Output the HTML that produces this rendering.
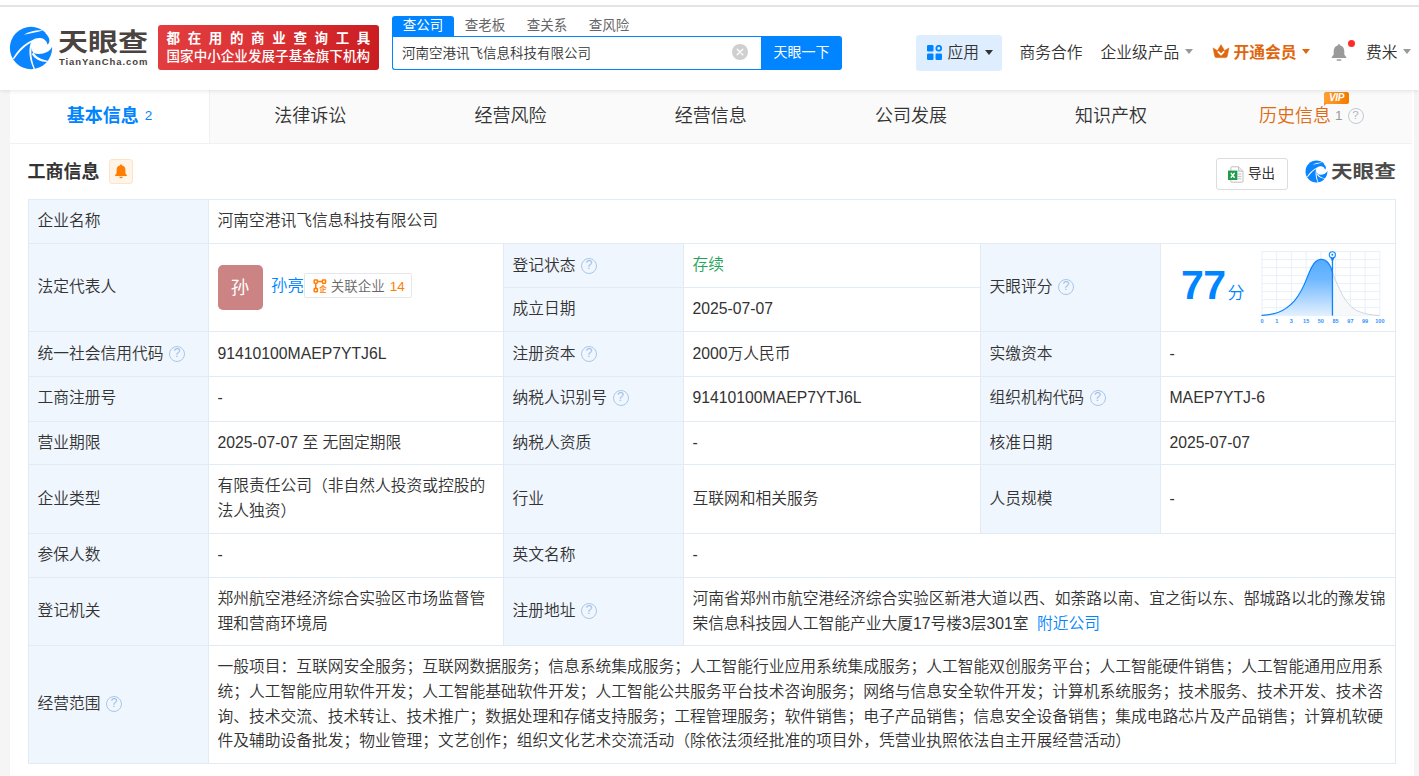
<!DOCTYPE html>
<html lang="zh-CN">
<head>
<meta charset="utf-8">
<title>河南空港讯飞信息科技有限公司 - 天眼查</title>
<style>
*{box-sizing:border-box;margin:0;padding:0}
html,body{width:1419px;height:776px;overflow:hidden;background:#f5f5f5}
body{font-family:"Liberation Sans","Noto Sans CJK SC",sans-serif;color:#333;font-size:15.75px;position:relative}
a{text-decoration:none;color:#0084ff}
.abs{position:absolute}
/* ---------- header ---------- */
#header{position:absolute;left:0;top:0;width:1419px;height:90px;background:#fff;box-shadow:0 1px 4px rgba(0,0,0,.10);z-index:5}
#topline{position:absolute;left:0;top:5px;width:1419px;height:2px;background:#e4e4e4}
#logo-swirl{position:absolute;left:5px;top:20px;width:60px;height:56px}
#logo-cn{position:absolute;left:58px;top:23.6px;width:92px;height:36px;line-height:36px;font-size:25px;font-weight:700;color:#4a4340;white-space:nowrap;letter-spacing:0;transform:scaleX(1.2);transform-origin:0 50%}
#logo-en{position:absolute;left:59px;top:56px;width:92px;height:12px;line-height:12px;font-size:9.5px;font-weight:700;color:#4a4340;letter-spacing:.92px;white-space:nowrap}
#banner{position:absolute;left:158px;top:25px;width:221px;height:45px;border-radius:3px;background:linear-gradient(100deg,#e23d40 0%,#dc3336 45%,#c91c21 100%);color:#fff;font-weight:500;white-space:nowrap}
#banner .l1{font-weight:700;position:absolute;left:8.5px;top:5.7px;height:16px;line-height:16px;font-size:13.5px;letter-spacing:7.65px}
#banner .l2{position:absolute;left:8.5px;top:24.2px;height:16px;line-height:16px;font-size:13.5px;letter-spacing:.07px}
#stabs{position:absolute;left:392px;top:16px;height:20px;white-space:nowrap;font-size:13.5px;color:#666}
#stabs span{display:inline-block;width:62px;height:20px;line-height:19px;text-align:center;vertical-align:top}
#stabs span.on{background:#0084ff;color:#fff;border-radius:3px 3px 0 0}
#sinput{position:absolute;left:392px;top:36px;width:370px;height:34px;border:1px solid #0084ff;border-right:none;border-radius:0 0 0 3px;background:#fff;font-size:13.5px;line-height:33px;font-weight:350;padding-left:9px;color:#333;white-space:nowrap}
#sclear{position:absolute;left:732px;top:44px;width:16px;height:16px}
#sbtn{position:absolute;left:761px;top:36px;width:81px;height:34px;background:#0084ff;color:#fff;border-radius:0 3px 3px 0;text-align:center;line-height:33px;font-size:14px;white-space:nowrap}
.nav{position:absolute;top:40px;height:25px;line-height:25px;font-size:15.75px;color:#333;white-space:nowrap;font-weight:350}
.caret{position:absolute;width:0;height:0;border-left:4.5px solid transparent;border-right:4.5px solid transparent;border-top:5px solid #999}
#app{position:absolute;left:916px;top:35px;width:86px;height:36px;background:#deeeff;border-radius:3px}
/* ---------- card ---------- */
#card{position:absolute;left:10px;top:90px;width:1404px;height:700px;background:#fff}
#tabs{position:absolute;left:0;top:0;width:1401.5px;height:54px;background:#fafafa;border-bottom:1px solid #f1f1f1}
#tabs .tab{position:absolute;top:0;height:53px;line-height:53.4px;font-weight:350;width:200.2px;text-align:center;font-size:18px;color:#333;white-space:nowrap}
#tabs .tab.on{background:#fff;color:#0084ff;font-weight:700;line-height:51.5px;border-right:1px solid #f0f0f0}
#tabs .tab small{font-size:13.5px;font-weight:400;vertical-align:1.6px;margin-left:1px}
#vip{position:absolute;left:1314px;top:2px;width:25px;height:11.5px;border-radius:2px 2px 2px 0;background:linear-gradient(90deg,#ffa033,#f57a00);color:#fff;font-size:10px;line-height:11.5px;font-weight:700;text-align:center;letter-spacing:-.4px}
#vip:after{content:"";position:absolute;left:0;top:11px;border-top:3.5px solid #f98d1a;border-right:3.5px solid transparent}
.q2{left:1337.5px;top:18px;width:16px;height:16px;border:1.6px solid #c0c9d6;border-radius:50%;color:#aab5c4;font-size:11.5px;line-height:13px;text-align:center}
h2#sec{position:absolute;left:17.5px;top:68.5px;height:26px;line-height:26px;font-size:18px;font-weight:700;color:#333;white-space:nowrap}
#bellbtn{position:absolute;left:99px;top:69px;width:24px;height:25px;border:1px solid #ffe3c8;background:#fff4e8;border-radius:3px}
#export{position:absolute;left:1206px;top:68px;width:72px;height:32px;border:1px solid #dcdcdc;border-radius:3px;background:#fff;font-size:13.5px;line-height:30px;color:#333;white-space:nowrap}
#bellbtn svg{position:absolute;left:4px;top:3.5px}
#export svg{position:absolute;left:11px;top:7px}
#export span{position:absolute;left:31px;top:0}
#wm-swirl{position:absolute;left:1293.3px;top:67px;width:31px;height:29px}
#wm-cn{position:absolute;left:1320.5px;top:66.5px;height:30px;line-height:30px;font-size:18px;font-weight:700;color:#4a4a4a;white-space:nowrap;transform:scaleX(1.2);transform-origin:0 50%}
/* ---------- table ---------- */
table#info{position:absolute;left:18px;top:109px;width:1368px;border-collapse:separate;border-spacing:0;table-layout:fixed;border-top:1px solid #e1ebf6;border-left:1px solid #e1ebf6;font-size:15.75px;line-height:24.75px;color:#333;font-weight:350}
#info td{border-right:1px solid #e1ebf6;border-bottom:1px solid #e1ebf6;padding:0 9px 0 8.5px;vertical-align:middle;background:#fff;overflow:hidden}
#info td.k{background:#f0f6fe;padding-left:8.5px}
#info tr.d2 td{padding-top:1px}
#info tr.u1 td{padding-bottom:2px}
.q{display:inline-block;width:16px;height:16px;border:1.7px solid #a9c7ea;border-radius:50%;color:#9fbfe4;font-size:12.5px;line-height:13px;text-align:center;vertical-align:2px;margin-left:5.5px;font-style:normal;font-family:"Liberation Sans",sans-serif}
.legal{position:absolute;left:0;top:0;width:100%;height:100%}
.avatar{position:absolute;left:9px;top:21px;width:45px;height:45px;border-radius:5px;background:#cb8383;color:#fff;font-size:18.5px;line-height:46px;text-align:center;text-indent:-1px;font-weight:400}
.lname{position:absolute;left:62px;top:28.3px;line-height:26px;font-size:16.4px;color:#0084ff;white-space:nowrap}
.rel{position:absolute;left:95.3px;top:29.3px;width:107.7px;height:24.6px;border:1px solid #e4e8ee;border-radius:2px;background:#fff;white-space:nowrap}
.rel svg{position:absolute;left:8px;top:5px}
.rel .rt{position:absolute;left:25.5px;top:.6px;line-height:23px;font-size:13.5px;color:#666}
.rel .rn{position:absolute;left:84.5px;top:.6px;line-height:23px;font-size:13.5px;color:#ff7d00}
#score{position:absolute;left:20px;top:13.2px;height:56px;white-space:nowrap;color:#0084ff}
#score b{font-size:41px;line-height:56px;font-weight:700;letter-spacing:-.5px}
#score span{font-size:17px;margin-left:2px;position:relative;top:0}
#chart{position:absolute;left:94px;top:1px;width:140px;height:85px}
.green{color:#1fa45b}
.or{color:#ff7d00}
</style>
</head>
<body>
<div id="header">
  <div id="topline"></div>
  <svg id="logo-swirl" viewBox="0 0 831 776">
    <symbol id="swirl" viewBox="0 0 831 776">
      <circle cx="360" cy="388" r="293" fill="#0a85ff"/>
      <path d="M385,276 C450,234 565,236 590,342 C632,300 622,238 556,180 L720,120 L720,372 L652,372 C622,452 500,492 400,462 C362,420 350,340 385,276 Z" fill="#fff"/>
      <path d="M260,204 C340,158 430,136 524,146 C440,170 350,190 260,204 Z" fill="#fff"/>
      <path d="M108,532 C175,415 268,322 390,272 L394,298 C290,342 205,428 124,544 Z" fill="#fff"/>
      <path d="M368,292 C326,380 322,520 398,682 L416,676 C350,520 354,392 398,300 Z" fill="#fff"/>
      <path d="M396,452 C430,512 500,552 592,566 L586,582 C490,578 412,542 370,470 Z" fill="#fff"/>
    </symbol>
    <use href="#swirl" x="0" y="0" width="831" height="776"/>
  </svg>
  <div id="logo-cn">天眼查</div>
  <div id="logo-en">TianYanCha.com</div>
  <div id="banner"><div class="l1">都在用的商业查询工具</div><div class="l2">国家中小企业发展子基金旗下机构</div></div>
  <div id="stabs"><span class="on">查公司</span><span>查老板</span><span>查关系</span><span>查风险</span></div>
  <div id="sinput">河南空港讯飞信息科技有限公司</div>
  <svg id="sclear" viewBox="0 0 16 16"><circle cx="8" cy="8" r="8" fill="#cfcfcf"/><path d="M5.2 5.2l5.6 5.6M10.8 5.2l-5.6 5.6" stroke="#fff" stroke-width="1.3" stroke-linecap="round"/></svg>
  <div id="sbtn">天眼一下</div>
  <div id="app"></div>
  <svg class="abs" style="left:926.5px;top:45px;width:15px;height:15px" viewBox="0 0 15 15"><rect x="0" y="0" width="6.5" height="6.5" rx="1.2" fill="#0084ff"/><rect x="0" y="8.5" width="6.5" height="6.5" rx="1.2" fill="#0084ff"/><rect x="8.5" y="8.5" width="6.5" height="6.5" rx="1.2" fill="#0084ff"/><circle cx="11.75" cy="3.25" r="2.4" fill="none" stroke="#0084ff" stroke-width="1.8"/></svg>
  <div class="nav" style="left:947.6px">应用</div><div class="caret" style="left:984.6px;top:50px;border-top-color:#333"></div>
  <div class="nav" style="left:1019.5px">商务合作</div>
  <div class="nav" style="left:1100.5px">企业级产品</div><div class="caret" style="left:1184.6px;top:49px"></div>
  <svg class="abs" style="left:1212px;top:44px;width:18px;height:15px" viewBox="0 0 18 15"><path d="M1.1 3.9 L5.4 6.7 L9 0.7 L12.6 6.7 L16.9 3.9 L15.3 12 Q15 13.6 13.6 13.6 L4.4 13.6 Q3 13.6 2.7 12 Z" fill="#e0660d" stroke="#e0660d" stroke-width=".6" stroke-linejoin="round"/><path d="M6.3 7.9 L9 10.7 L11.7 7.9" fill="none" stroke="#fff" stroke-width="1.7" stroke-linecap="round" stroke-linejoin="round"/></svg>
  <div class="nav" style="left:1233.5px;top:40px;color:#e0660d;font-weight:700">开通会员</div><div class="caret" style="left:1302px;top:49.4px;border-top-color:#e0660d"></div>
  <svg class="abs" style="left:1330px;top:43px;width:18px;height:19px" viewBox="0 0 18 19"><path d="M9 1.2 C9.8 1.2 10.3 1.7 10.3 2.4 C13 3.1 14.3 5.2 14.3 8 L14.3 11.6 L16.4 14.4 L16.4 15 L1.6 15 L1.6 14.4 L3.7 11.6 L3.7 8 C3.7 5.2 5 3.1 7.7 2.4 C7.7 1.7 8.2 1.2 9 1.2 Z" fill="#9a9a9a"/><rect x="6.6" y="16.3" width="4.8" height="1.5" rx=".7" fill="#9a9a9a"/></svg>
  <div class="abs" style="left:1347.5px;top:39.5px;width:7px;height:7px;border-radius:50%;background:#ff2a2a"></div>
  <div class="nav" style="left:1366px">费米</div><div class="caret" style="left:1403px;top:49px"></div>
</div>

<div id="card">
  <div id="tabs">
    <div class="tab on" style="left:0;width:200px">基本信息 <small>2</small></div>
    <div class="tab" style="left:200.2px">法律诉讼</div>
    <div class="tab" style="left:400.4px">经营风险</div>
    <div class="tab" style="left:600.6px">经营信息</div>
    <div class="tab" style="left:800.8px">公司发展</div>
    <div class="tab" style="left:1001.0px">知识产权</div>
    <div class="tab" style="left:1185px;color:#de6a12">历史信息</div>
    <div id="vip"><i>VIP</i></div>
    <div class="abs" style="left:1325px;top:14px;line-height:24px;font-size:13.5px;color:#999">1</div>
    <div class="abs q2">?</div>
  </div>
  <h2 id="sec">工商信息</h2>
  <div id="bellbtn"><svg viewBox="0 0 14 15" width="14" height="15"><path d="M7 .6C7.7 .6 8.1 1 8.1 1.6C10.3 2.1 11.4 3.8 11.4 6V9.2L12.9 11.3V12H1.1V11.3L2.6 9.2V6C2.6 3.8 3.7 2.1 5.9 1.6C5.9 1 6.3 .6 7 .6Z" fill="#ff7d00"/><path d="M5.2 12.8H8.8Q8.6 14.3 7 14.3Q5.4 14.3 5.2 12.8Z" fill="#ff7d00"/></svg></div>
  <div id="export"><svg viewBox="0 0 16 17" width="16" height="17"><path d="M3.5 .8H10.6L15 5.2V15.6Q15 16.2 14.4 16.2H3.5Q2.9 16.2 2.9 15.6V1.4Q2.9 .8 3.5 .8Z" fill="#fff" stroke="#b9b9b9" stroke-width=".9"/><path d="M10.6 .8V5.2H15" fill="#eee" stroke="#b9b9b9" stroke-width=".9"/><path d="M10 8H13.4M10 10.4H13.4M10 12.8H13.4" stroke="#b5b5b5" stroke-width=".9"/><rect x="0" y="4.6" width="9.4" height="9.4" fill="#1d9d4c"/><path d="M2.8 6.9L6.6 11.7M6.6 6.9L2.8 11.7" stroke="#fff" stroke-width="1.5"/></svg><span>导出</span></div>
  <svg id="wm-swirl" viewBox="0 0 831 776"><use href="#swirl" x="0" y="0" width="831" height="776"/></svg>
  <div id="wm-cn">天眼查</div>
  <table id="info">
    <colgroup><col style="width:180px"><col style="width:295px"><col style="width:180px"><col style="width:297px"><col style="width:180px"><col style="width:235px"></colgroup>
    <tr style="height:44px"><td class="k">企业名称</td><td colspan="5">河南空港讯飞信息科技有限公司</td></tr>
    <tr style="height:44px">
      <td class="k" rowspan="2">法定代表人</td>
      <td rowspan="2" style="position:relative"><div class="legal"><span class="avatar">孙</span><a class="lname">孙亮</a><span class="rel"><svg viewBox="0 0 14 14" width="14" height="14"><g fill="none" stroke="#ff7d00" stroke-width="1.5"><rect x="1.2" y="1" width="3.2" height="3.2" rx=".6"/><rect x="1.2" y="9.6" width="3.2" height="3.2" rx=".6"/><rect x="9.4" y="1" width="3.2" height="3.2" rx=".6"/><path d="M2.8 4.2V9.6M4.4 2.6H9.4"/></g><text x="6.2" y="13.2" font-size="7.6" font-weight="700" fill="#ff7d00" font-family="Noto Sans CJK SC,sans-serif">企</text></svg><span class="rt">关联企业</span><span class="rn">14</span></span></div></td>
      <td class="k" style="padding-top:2px">登记状态<i class="q">?</i></td><td style="padding-top:0"><span class="green">存续</span></td>
      <td class="k" rowspan="2">天眼评分<i class="q">?</i></td>
      <td rowspan="2" style="position:relative;padding:0"><div id="score"><b>77</b><span>分</span></div>
      <svg id="chart" viewBox="0 0 1278 776">
        <defs><linearGradient id="cg" x1="0" y1="0" x2="0" y2="1"><stop offset="0" stop-color="#55abff"/><stop offset=".35" stop-color="#6fb8ff"/><stop offset="1" stop-color="#e2f0ff"/></linearGradient></defs>
        <g fill="none" stroke="#e4eefa" stroke-width="8"><path d="M63.0 60V645"/><path d="M197.6 60V645"/><path d="M332.2 60V645"/><path d="M466.8 60V645"/><path d="M601.4 60V645"/><path d="M736.0 60V645"/><path d="M870.6 60V645"/><path d="M1005.2 60V645"/><path d="M1139.8 60V645"/><path d="M63 60.0H1140"/><path d="M63 133.1H1140"/><path d="M63 206.2H1140"/><path d="M63 279.3H1140"/><path d="M63 352.4H1140"/><path d="M63 425.5H1140"/><path d="M63 498.6H1140"/><path d="M63 571.7H1140"/><path d="M63 644.8H1140"/></g>
        <path d="M707,248 C720,290 745,345 775,410 C810,490 860,560 930,600 C1000,632 1070,640 1140,643 L707,645 Z" fill="#f6f7f9" fill-opacity=".9" transform="translate(0,0)"/>
        <path d="M63,643 C130,638 170,630 210,616 C260,598 310,565 360,510 C410,450 440,390 475,300 C500,235 520,180 555,150 C580,128 620,124 650,146 C680,168 695,205 707,248 L707,645 L63,645 Z" fill="url(#cg)"/>
        <path d="M707,248 C720,290 745,345 775,410 C810,490 860,560 930,600 C1000,632 1070,640 1140,643" fill="none" stroke="#c9d1dc" stroke-width="8"/>
        <path d="M63,643 C130,638 170,630 210,616 C260,598 310,565 360,510 C410,450 440,390 475,300 C500,235 520,180 555,150 C580,128 620,124 650,146 C680,168 695,205 707,248" fill="none" stroke="#0a85ff" stroke-width="11" stroke-linecap="round"/>
        <path d="M707 120V645" stroke="#0a85ff" stroke-width="12"/>
        <path d="M686,112 L728,112 L707,156 Z" fill="#0a85ff"/>
        <circle cx="706" cy="90" r="28" fill="#fff" stroke="#0a85ff" stroke-width="10"/>
        <circle cx="706" cy="90" r="9" fill="#0a85ff"/>
        <g font-family="Liberation Sans,sans-serif" font-size="50" font-weight="700" fill="#2b92ff" text-anchor="middle"><text x="63" y="714">0</text><text x="198" y="714">1</text><text x="332" y="714">3</text><text x="467" y="714">15</text><text x="601" y="714">50</text><text x="736" y="714">85</text><text x="871" y="714">97</text><text x="1005" y="714">99</text><text x="1140" y="714">100</text></g>
      </svg>
      </td>
    </tr>
    <tr style="height:44px"><td class="k">成立日期</td><td>2025-07-07</td></tr>
    <tr style="height:45px"><td class="k">统一社会信用代码<i class="q">?</i></td><td>91410100MAEP7YTJ6L</td><td class="k">注册资本<i class="q">?</i></td><td>2000万人民币</td><td class="k">实缴资本</td><td>-</td></tr>
    <tr class="u1" style="height:45px"><td class="k">工商注册号</td><td>-</td><td class="k">纳税人识别号<i class="q">?</i></td><td>91410100MAEP7YTJ6L</td><td class="k">组织机构代码<i class="q">?</i></td><td>MAEP7YTJ-6</td></tr>
    <tr class="d2" style="height:43px"><td class="k">营业期限</td><td>2025-07-07 至 无固定期限</td><td class="k">纳税人资质</td><td>-</td><td class="k">核准日期</td><td>2025-07-07</td></tr>
    <tr style="height:69px"><td class="k">企业类型</td><td>有限责任公司（非自然人投资或控股的法人独资）</td><td class="k">行业</td><td>互联网和相关服务</td><td class="k">人员规模</td><td>-</td></tr>
    <tr style="height:44px"><td class="k">参保人数</td><td>-</td><td class="k">英文名称</td><td colspan="3">-</td></tr>
    <tr style="height:68px"><td class="k">登记机关</td><td>郑州航空港经济综合实验区市场监督管理和营商环境局</td><td class="k">注册地址<i class="q">?</i></td><td colspan="3">河南省郑州市航空港经济综合实验区新港大道以西、如荼路以南、宜之街以东、郜城路以北的豫发锦荣信息科技园人工智能产业大厦17号楼3层301室 <a style="margin-left:4px">附近公司</a></td></tr>
    <tr style="height:118px"><td class="k">经营范围<i class="q">?</i></td><td colspan="5">一般项目：互联网安全服务；互联网数据服务；信息系统集成服务；人工智能行业应用系统集成服务；人工智能双创服务平台；人工智能硬件销售；人工智能通用应用系统；人工智能应用软件开发；人工智能基础软件开发；人工智能公共服务平台技术咨询服务；网络与信息安全软件开发；计算机系统服务；技术服务、技术开发、技术咨询、技术交流、技术转让、技术推广；数据处理和存储支持服务；工程管理服务；软件销售；电子产品销售；信息安全设备销售；集成电路芯片及产品销售；计算机软硬件及辅助设备批发；物业管理；文艺创作；组织文化艺术交流活动（除依法须经批准的项目外，凭营业执照依法自主开展经营活动）</td></tr>
  </table>
</div>
</body>
</html>
